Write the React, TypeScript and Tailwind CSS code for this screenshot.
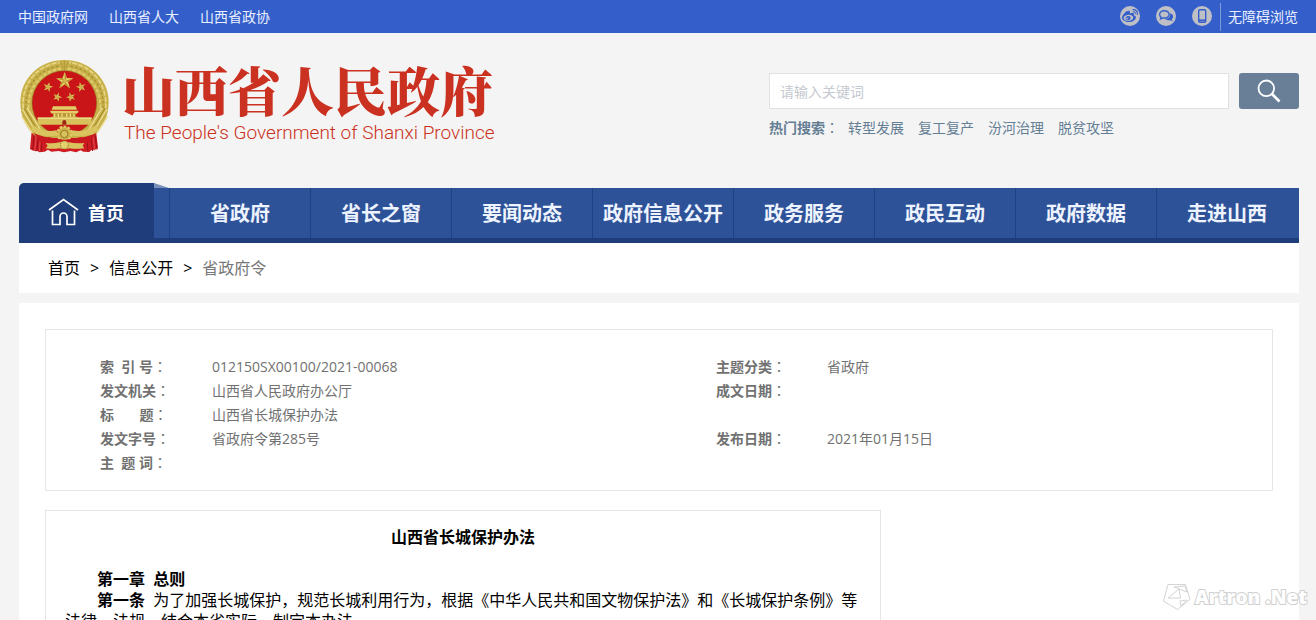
import { FaWeibo } from "react-icons/fa";

const topLinks = ["中国政府网", "山西省人大", "山西省政协"];

const hotWords = ["转型发展", "复工复产", "汾河治理", "脱贫攻坚"];

const navItems = [
  "省政府",
  "省长之窗",
  "要闻动态",
  "政府信息公开",
  "政务服务",
  "政民互动",
  "政府数据",
  "走进山西",
];

const infoRows = [
  ["索\u00a0\u00a0引\u00a0号", "012150SX00100/2021-00068", "主题分类", "省政府"],
  ["发文机关", "山西省人民政府办公厅", "成文日期", ""],
  ["标\u00a0\u00a0\u00a0\u00a0\u00a0\u00a0\u00a0题", "山西省长城保护办法", "", ""],
  ["发文字号", "省政府令第285号", "发布日期", "2021年01月15日"],
  ["主\u00a0\u00a0题\u00a0词", "", "", ""],
];

// Full-width colon, centred in its box
function Colon() {
  return <span className="font-['Noto_Sans_CJK_TC',sans-serif] leading-none font-normal">：</span>;
}

function Star({ x, y, r, turn = 0 }: { x: number; y: number; r: number; turn?: number }) {
  return (
    <g transform={`translate(${x} ${y}) rotate(${turn}) scale(${r})`}>
      <path d="M0-1 .235-.324.951-.309.38.124.588.809 0 .4-.588.809-.38.124-.951-.309-.235-.324Z" fill="#e6d06a" />
      <path d="M0 0 0-1 .235-.324ZM0 0 .951-.309.38.124ZM0 0 .588.809 0 .4ZM0 0-.588.809-.38.124ZM0 0-.951-.309-.235-.324Z" fill="#b8922f" />
    </g>
  );
}

function Emblem() {
  return (
    <svg viewBox="12 12 270 291" className="h-[97px] w-[90px] shrink-0" aria-hidden="true">
      {/* ribbons */}
      <path d="M50 228 45 282q10 8 22 6l6 4 16-2 10-6 10 6 22-2 16 4 20-4 16 4 14-6 8 4 18 1 6-6q12 1 20-6l-6-52Z" fill="#cf1c22" />
      <path d="M58 238l-5 46M70 246l-4 42M81 252l-2 36M240 240l6 44M228 248l5 40M216 254l3 36" stroke="#98131a" strokeWidth="3" fill="none" />
      <path d="M64 242l-5 44M234 244l5 42M76 250l-3 38" stroke="#e8484a" strokeWidth="3" />
      {/* wreath */}
      <path d="M148 15C222 15 281 70 281 142 281 186 262 222 232 246L148 258 64 246C34 222 16 186 16 142 16 70 74 15 148 15Z" fill="#c9b149" />
      <path d="M25 160C18 90 62 32 134 22M272 160C278 90 234 32 162 22" stroke="#e5d585" strokeWidth="5" strokeDasharray="15 4" fill="none" />
      <path d="M33 160C28 96 68 42 136 32M264 160C269 96 228 42 160 32" stroke="#a98f33" strokeWidth="4" strokeDasharray="8 6" fill="none" />
      <path d="M41 160C38 100 76 50 138 41M256 160C259 100 220 50 158 41" stroke="#e0cd72" strokeWidth="6" strokeDasharray="11 5" fill="none" />
      <path d="M22 162 68 240M36 158 84 236M20 184 52 234M276 162 230 240M262 158 214 236M278 184 246 234" stroke="#ecdf94" strokeWidth="4" />
      <path d="M28 160 76 240M270 160 222 240" stroke="#a08629" strokeWidth="3" />
      <path d="M148 16v28M136 20l8 20M160 20l-8 20" stroke="#a58a2e" strokeWidth="2" />
      <circle cx="148" cy="144" r="97" fill="#c91418" stroke="#8f6b20" strokeWidth="1.500" />
      {/* stars */}
      <Star x={149} y={78} r={27} />
      <Star x={99} y={96} r={15} turn={15} />
      <Star x={198} y={96} r={15} turn={-15} />
      <Star x={127} y={126} r={14} turn={20} />
      <Star x={168} y={126} r={14} turn={-20} />
      {/* gate tower */}
      <path d="M114 154h68l4 10h-76ZM106 167h84v5l-5 4h-74l-5-4Z" fill="#e3cd66" />
      <path d="M114 176h68v11h-68Z" fill="#b7972f" />
      <path d="M119 176v11M130 176v11M141 176v11M155 176v11M166 176v11M177 176v11" stroke="#eddd8a" strokeWidth="4" />
      <path d="M68 187h40v-2h80v2h42v22H68Z" fill="#d8c05a" />
      <path d="M68 190h162" stroke="#efe196" strokeWidth="3" />
      <path d="M142 209v-8a6 6 0 0 1 12 0v8Z" fill="#9c2516" />
      {/* drapery and gear */}
      <path d="M54 210q34 24 70 16l6 14q-50 12-82-14ZM244 210q-34 24-72 16l-6 14q50 12 84-14Z" fill="#dac460" />
      <path d="M56 234q40 18 72 14l20 6 20-6q36 4 76-14l-24 30H78Z" fill="#c91820" />
      <circle cx="148" cy="236" r="21" fill="#cdb24a" stroke="#dfca66" strokeWidth="7" strokeDasharray="8 4" />
      <circle cx="148" cy="237" r="11" fill="#d9c25a" stroke="#94762a" strokeWidth="3" />
      <path d="M98 246q50 16 102 0l-6 16q-46 8-90 0Z" fill="#c91820" />
      <path d="M92 264q26 2 42-2 14-5 28 0 18 4 46 2l-5 8 5 8q-28 3-44 0-16 4-32 0-18 3-40 0l6-8Z" fill="#dac460" />
      <circle cx="148" cy="270" r="12" fill="#e4d06d" stroke="#9b7c2b" strokeWidth="3" strokeDasharray="5 3" />
    </svg>
  );
}

function TopBar() {
  return (
    <div className="flex h-[33px] shrink-0 items-center justify-between bg-[#345fcb] pr-[18px] pl-[18px] text-sm text-[#eaf0ff]">
      <div className="flex gap-[21px]">
        {topLinks.map((link) => (
          <a key={link} href="#">
            {link}
          </a>
        ))}
      </div>
      <div className="flex items-center">
        <div className="flex items-center gap-4 pr-2 pb-[2px]">
          <a href="#" aria-label="微博" className="flex size-5 items-center justify-center rounded-full bg-[#bfc0c6] text-[#345fcb]">
            <FaWeibo className="size-4" />
          </a>
          <a href="#" aria-label="微信" className="flex size-5 items-center justify-center rounded-full bg-[#bfc0c6] text-[#345fcb]">
            <svg viewBox="0 0 16 16" className="size-4">
              <path d="M12 5.200C15.500 6 16 9.500 13.800 11.200L14.600 13.200 12 12.200C10 12.600 8 12 7.200 10.800 10.500 10.800 13 8.500 12 5.200Z" fill="currentColor" />
              <path d="M6.400 2.800C3.600 2.800 1.600 4.400 1.600 6.400 1.600 7.600 2.200 8.600 3.200 9.300L2.700 10.900 4.900 9.900C8.400 10.500 11.200 8.800 11.200 6.400 11.200 4.400 9.200 2.800 6.400 2.800Z" fill="none" stroke="currentColor" strokeWidth="1.400" />
            </svg>
          </a>
          <a href="#" aria-label="手机版" className="flex size-5 items-center justify-center rounded-full bg-[#bfc0c6] text-[#345fcb]">
            <svg viewBox="0 0 16 16" className="size-4">
              <rect x="4.700" y="1.700" width="7" height="12.500" rx="1.200" fill="none" stroke="currentColor" strokeWidth="1.400" />
              <path d="M5 12.300h6.500" stroke="currentColor" strokeWidth="1.800" />
            </svg>
          </a>
        </div>
        <a href="#" className="flex h-7 items-center border-l border-[#7f99dc] pl-[7px]">
          无障碍浏览
        </a>
      </div>
    </div>
  );
}

function Header() {
  return (
    <header className="flex h-[150px] shrink-0 items-start justify-between pr-[17px] pl-[19px]">
      <a href="#" className="flex pt-[26px] text-[#cb3120]">
        <Emblem />
        <div className="pl-[13px]">
          <h1 className="font-['Noto_Serif_CJK_SC','Noto_Sans_CJK_SC',serif] text-[53px] leading-[60px] font-black">
            山西省人民政府
          </h1>
          <p className="pt-1 pl-[2px] font-[Roboto,sans-serif] text-[19px] leading-5 font-light">
            The People's Government of Shanxi Province
          </p>
        </div>
      </a>
      <div className="pt-10">
        <form className="flex gap-[10px]" onSubmit={(e) => e.preventDefault()}>
          <input
            type="text"
            aria-label="请输入关键词"
            placeholder="请输入关键词"
            className="h-9 w-[460px] border border-[#dfe1e4] bg-white px-[10px] text-sm outline-none placeholder:text-[#c5c9d0]"
          />
          <button type="submit" aria-label="搜索" className="flex h-9 w-[60px] items-center justify-center rounded-[3px] bg-[#687f97] text-white">
            <svg viewBox="0 0 24 24" className="size-6" fill="none" stroke="currentColor">
              <circle cx="9.300" cy="9.300" r="7.800" strokeWidth="1.800" />
              <path d="M15 15 22.500 22.500" strokeWidth="2.600" />
            </svg>
          </button>
        </form>
        <div className="flex pt-[9px] text-sm leading-5 text-[#647e94]">
          <span className="pr-[9px] font-bold">
            热门搜索
            <Colon />
          </span>
          <div className="flex gap-[14px]">
            {hotWords.map((word) => (
              <a key={word} href="#">
                {word}
              </a>
            ))}
          </div>
        </div>
      </div>
    </header>
  );
}

function Nav() {
  return (
    <nav className="flex shrink-0 items-end">
      <a href="#" className="flex h-[60px] w-[135px] items-center gap-2 rounded-tl-[5px] bg-[#1f3d7a] pl-[29px] text-lg font-bold text-white">
        <svg viewBox="0 0 32 30" className="h-[30px] w-8" fill="none" stroke="currentColor" strokeWidth="1.700">
          <path d="M1 12 15.500 1.500 30 12" />
          <path d="M4.500 12.500V26.500H12V18.500a3.500 3.500 0 0 1 7 0V26.500H26.500V12.500" />
        </svg>
        首页
      </a>
      <div className="w-[15px]">
        <svg viewBox="0 0 15 5" className="block h-[5px] w-[15px]">
          <path d="M0 0 15 5H0Z" fill="#7b90b8" />
        </svg>
        <div className="h-[55px] border-b-[5px] border-[#1f3d7a] bg-[#2d5297]" />
      </div>
      <div className="flex h-[55px] grow border-b-[5px] border-[#1f3d7a] bg-[#2d5297] pr-[2px]">
        {navItems.map((item) => (
          <a key={item} href="#" className="flex flex-1 items-center justify-center border-l border-[#1f4184] pt-[2px] text-xl font-bold whitespace-nowrap text-[#edf3ff]">
            {item}
          </a>
        ))}
      </div>
    </nav>
  );
}

function InfoTable() {
  return (
    <div className="border border-[#e6e6e6] pt-[25px] pb-[15px] pl-[54px]">
      <table className="w-full table-fixed text-left text-sm leading-6 text-[#717171]">
        <tbody>
          {infoRows.map(([label, value, label2, value2]) => (
            <tr key={label} className="h-6">
              <th scope="row" className="w-[112px] font-bold">
                {label}
                <Colon />
              </th>
              <td className="w-[43%]">{value}</td>
              <th scope="row" className="w-[111px] font-bold">
                {label2}
                {label2 && <Colon />}
              </th>
              <td>{value2}</td>
            </tr>
          ))}
        </tbody>
      </table>
    </div>
  );
}

function Article() {
  return (
    <article className="mt-[19px] max-w-[836px] border border-[#e6e6e6] px-[19px] pt-4 text-base leading-[21px] text-black">
      <h2 className="pb-[21px] text-center font-bold">山西省长城保护办法</h2>
      <p className="indent-8 font-bold">第一章{"\u00a0\u00a0"}总则</p>
      <p className="indent-8">
        <b>第一条</b>
        {"\u00a0\u00a0"}
        为了加强长城保护，规范长城利用行为，根据《中华人民共和国文物保护法》和《长城保护条例》等法律、法规，结合本省实际，制定本办法。
      </p>
    </article>
  );
}

function Watermark() {
  return (
    <div className="absolute right-[9px] bottom-[9px] flex items-center gap-[3px]">
      <svg viewBox="0 0 30 28" className="h-7 w-[30px]" fill="white" stroke="#d3d3d3" strokeLinejoin="round">
        <path d="M6 1.500H23.500L28 16.500 15.500 26.500 1.500 18Z" />
        <path d="M6 15 17 6 18.500 15ZM12 4 23 3 25 9ZM18 18 25 17 19 23Z" />
      </svg>
      <span className="font-['Open_Sans',sans-serif] text-[19px] leading-6 font-extrabold text-white [-webkit-text-stroke:2px_#d0d0d0] [paint-order:stroke_fill]">
        Artron .Net
      </span>
    </div>
  );
}

export default function App() {
  return (
    <div className="relative flex h-screen flex-col overflow-hidden bg-[#f4f4f4] font-['Open_Sans','Noto_Sans_CJK_SC',sans-serif]">
      <TopBar />
      <Header />
      <main className="flex grow flex-col pr-[17px] pl-[19px]">
        <Nav />
        <div className="flex h-[50px] shrink-0 items-center gap-[10px] bg-white pl-[29px] text-base text-black">
          <a href="#">首页</a>
          <span>&gt;</span>
          <a href="#">信息公开</a>
          <span>&gt;</span>
          <span className="text-[#777]">省政府令</span>
        </div>
        <div className="mt-[10px] grow bg-white px-[26px] pt-[26px]">
          <InfoTable />
          <Article />
        </div>
      </main>
      <Watermark />
    </div>
  );
}
